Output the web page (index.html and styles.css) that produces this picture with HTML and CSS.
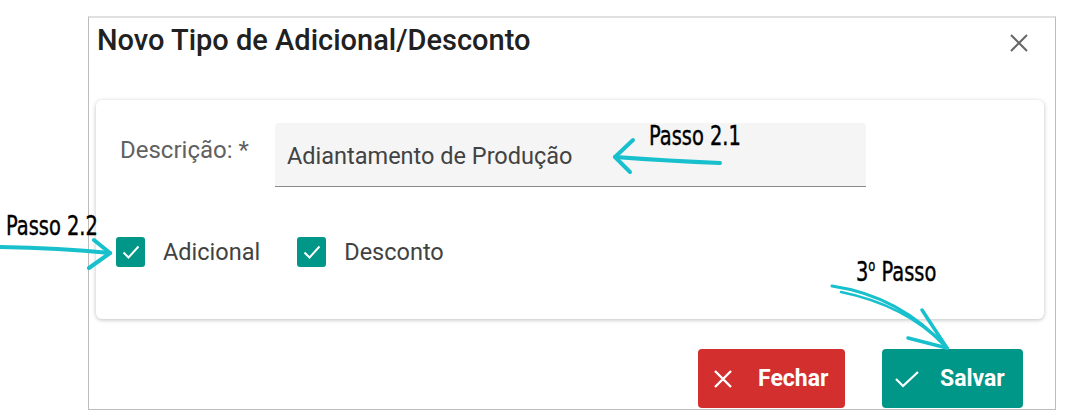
FILE: index.html
```html
<!DOCTYPE html>
<html lang="pt-BR">

<head>
    <meta charset="UTF-8">
    <meta name="viewport" content="width=device-width, initial-scale=1.0">
    <title>Novo Tipo de Adicional/Desconto</title>
    <link rel="stylesheet" href="styles.css">
</head>

<body>
    <div class="dialog">
        <header class="dialog-header">
            <h1>Novo Tipo de Adicional/Desconto</h1>
            <button class="close-btn" aria-label="Fechar">
                <svg width="20" height="20" viewBox="0 0 20 20">
                    <path d="M2 2 L18 18 M18 2 L2 18" stroke="#666" stroke-width="2" fill="none" />
                </svg>
            </button>
        </header>

        <section class="card">
            <div class="field-row">
                <label class="field-label">Descrição: *</label>
                <div class="field-input">Adiantamento de Produção</div>
            </div>
            <div class="check-row">
                <label class="check">
                    <span class="check-box">
                        <svg width="22" height="22" viewBox="0 0 22 22">
                            <path d="M3.5 11.5 L8.5 16.5 L18.5 5.5" stroke="#fff" stroke-width="2" fill="none" />
                        </svg>
                    </span>
                    Adicional
                </label>
                <label class="check">
                    <span class="check-box">
                        <svg width="22" height="22" viewBox="0 0 22 22">
                            <path d="M3.5 11.5 L8.5 16.5 L18.5 5.5" stroke="#fff" stroke-width="2" fill="none" />
                        </svg>
                    </span>
                    Desconto
                </label>
            </div>
        </section>

        <footer class="dialog-actions">
            <button class="btn btn-close">
                <svg width="22" height="22" viewBox="0 0 22 22">
                    <path d="M3 3 L19 19 M19 3 L3 19" stroke="#fff" stroke-width="2.4" fill="none" />
                </svg>
                Fechar
            </button>
            <button class="btn btn-save">
                <svg width="26" height="22" viewBox="0 0 26 22">
                    <path d="M2 11 L9 18 L24 4" stroke="#fff" stroke-width="2.2" fill="none" />
                </svg>
                Salvar
            </button>
        </footer>
    </div>

    <!-- annotations drawn over the screenshot -->
    <span class="note note-21">Passo 2.1</span>
    <span class="note note-22">Passo 2.2</span>
    <span class="note note-3">3<sup>o</sup> Passo</span>

    <svg class="arrows" width="1066" height="420" viewBox="0 0 1066 420">
        <g stroke="#17c0cc" stroke-width="4" fill="none" stroke-linecap="round" stroke-linejoin="round">
            <path d="M720 163 Q670 161 615 157" />
            <path d="M633 140 L615 157 L630 172" />

            <path d="M0 247 Q60 248 110 253" />
            <path d="M94 240 L110 253 L89 268" />

            <path d="M832 286 Q900 296 947 348" stroke-width="3" />
            <path d="M841 292 Q905 305 944 345" stroke-width="2.5" />
            <path d="M922 310 L947 348" stroke-width="3.5" />
            <path d="M908 338 L947 348" stroke-width="3.5" />
        </g>
    </svg>
</body>

</html>
```

FILE: styles.css
```css
body {
    margin: 0;
    padding: 0;
    background-color: #fff;
    font-family: Roboto, "Liberation Sans", sans-serif;
    color: #333;
    width: 1066px;
    height: 420px;
    position: relative;
    overflow: hidden;
}

.dialog {
    margin: 16px 0 0 88px;
    width: 968px;
    height: 394px;
    border: 1px solid #bdbdbd;
    border-top: 2px solid #e0e0e0;
    box-sizing: border-box;
    background: #fff;
    padding: 0 11px 0 7px;
    display: flex;
    flex-direction: column;
}

.dialog-header {
    display: flex;
    justify-content: space-between;
    align-items: flex-start;
    height: 82px;
}

.dialog-header h1 {
    margin: 4px 0 0 1px;
    font-size: 29px;
    font-weight: 500;
    color: #212121;
    line-height: 36px;
}

.close-btn {
    background: none;
    border: none;
    padding: 0;
    margin: 15px 15px 0 0;
    cursor: pointer;
    line-height: 0;
}

.card {
    height: 219px;
    box-sizing: border-box;
    border-radius: 6px;
    box-shadow: 0 1px 4px rgba(0, 0, 0, 0.25);
    padding: 23px 20px 0 20px;
}

.field-row {
    display: flex;
    align-items: flex-start;
}

.field-label {
    width: 155px;
    margin: 13px 0 0 4px;
    font-size: 24px;
    color: #616161;
}

.field-input {
    width: 591px;
    height: 64px;
    box-sizing: border-box;
    background: #f5f5f5;
    border-bottom: 1px solid #8a8a8a;
    border-radius: 4px 4px 0 0;
    padding: 19px 12px 0 12px;
    font-size: 23.5px;
    color: #424242;
}

.check-row {
    display: flex;
    gap: 37px;
    margin-top: 50px;
}

.check {
    display: flex;
    align-items: center;
    gap: 18px;
    font-size: 23.5px;
    color: #424242;
}

.check-box {
    width: 29px;
    height: 30px;
    border-radius: 3px;
    background: #009688;
    display: flex;
    align-items: center;
    justify-content: center;
}

.dialog-actions {
    display: flex;
    justify-content: flex-end;
    gap: 37px;
    margin-top: 30px;
    padding-right: 21px;
}

.btn {
    height: 59px;
    border: none;
    border-radius: 4px;
    color: #fff;
    font-family: Roboto, "Liberation Sans", sans-serif;
    font-size: 23px;
    font-weight: 700;
    display: flex;
    align-items: center;
    gap: 24px;
    cursor: pointer;
}

.btn-close {
    width: 147px;
    background: #d32f2f;
    padding: 0 14px;
}

.btn-save {
    width: 141px;
    background: #009688;
    padding: 0 12px;
    gap: 20px;
}

.note {
    position: absolute;
    font-family: "DejaVu Sans Condensed", "Liberation Sans Narrow", sans-serif;
    font-stretch: condensed;
    font-size: 27px;
    color: #000;
    line-height: 1;
    transform-origin: left top;
    transform: scaleX(0.8);
    -webkit-text-stroke: 0.4px #000;
}

.note sup {
    font-size: 16px;
    vertical-align: 10px;
}

.note-21 {
    left: 649px;
    top: 122px;
}

.note-22 {
    left: 6px;
    top: 212px;
}

.note-3 {
    left: 856px;
    top: 258px;
}

.arrows {
    position: absolute;
    left: 0;
    top: 0;
    pointer-events: none;
}
```
